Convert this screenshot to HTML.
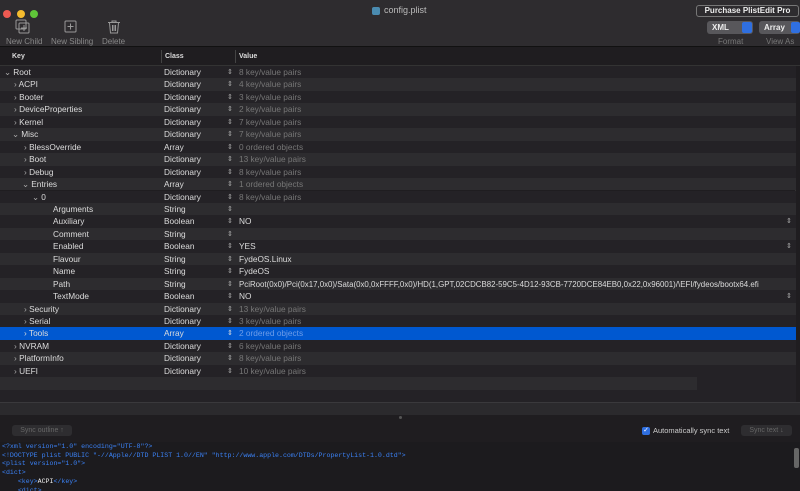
<!DOCTYPE html>
<html><head><meta charset="utf-8"><style>
*{margin:0;padding:0;box-sizing:border-box}
html,body{width:800px;height:491px;overflow:hidden}
body{background:#1f1d20;font-family:"Liberation Sans",sans-serif;font-size:8px;color:#dcdcdc;position:relative}
.a{position:absolute}
.tb{left:0;top:0;width:800px;height:47px;background:#2e2c2f;border-bottom:1px solid #111}
.hdr{left:0;top:47px;width:800px;height:19px;background:#1f1d20;border-bottom:1px solid #333}
.row{position:absolute;left:0;width:796px;height:12.45px;line-height:13px;white-space:nowrap;font-size:8.3px}
.e{background:#242226}.o{background:#2d2c2f}
.sel{background:#0058d0}
.k,.c,.v,.s{position:absolute;top:0}
.c{left:164px}.s{left:227px;color:#aaa;font-size:7px}.v{left:239px}
.g{color:#777}
.ch{color:#aaa}
.mono{font-family:"Liberation Mono",monospace;font-size:6.6px;line-height:8.7px;color:#3b82f6;white-space:pre}
.btn{border-radius:3px;color:#666;background:#2e2d30;font-size:7px;text-align:center}
</style></head><body>
<div class="a" style="left:0;top:0;width:800px;height:4px;background:#1d4f7a"></div>
<div class="a tb"></div>
<div class="a" style="left:3px;top:10px;width:8px;height:8px;border-radius:50%;background:#ee5a52"></div>
<div class="a" style="left:17px;top:10px;width:8px;height:8px;border-radius:50%;background:#f4bb2e"></div>
<div class="a" style="left:30px;top:10px;width:8px;height:8px;border-radius:50%;background:#5fc639"></div>
<div class="a" style="left:372px;top:7px;width:8px;height:8px;border-radius:2px;background:#4a8bb0"></div>
<div class="a" style="left:384px;top:5px;font-size:9px;color:#bbb">config.plist</div>
<svg class="a" style="left:14px;top:19px" width="18" height="16" viewBox="0 0 18 16" fill="none" stroke="#999" stroke-width="1"><rect x="2" y="1" width="10" height="9" rx="1"/><rect x="5" y="4" width="10" height="10" rx="1"/><path d="M10 6v6M7 9h6"/></svg>
<svg class="a" style="left:64px;top:20px" width="14" height="14" viewBox="0 0 14 14" fill="none" stroke="#999"><rect x="1" y="1" width="11" height="11" rx="1"/><path d="M6.5 3.5v6M3.5 6.5h6"/></svg>
<svg class="a" style="left:107px;top:20px" width="14" height="14" viewBox="0 0 14 14" fill="none" stroke="#999"><path d="M1 2.5h12M5 2.5V1h4v1.5M2.5 3l1 10h7l1-10M5.5 5v6M7 5v6M8.5 5v6"/></svg>
<div class="a" style="left:6px;top:37px;color:#888">New Child</div>
<div class="a" style="left:51px;top:37px;color:#888">New Sibling</div>
<div class="a" style="left:102px;top:37px;color:#888">Delete</div>
<div class="a" style="left:696px;top:5px;width:103px;height:12px;border:1px solid #777;border-radius:3px;text-align:center;font-size:8px;line-height:10px;color:#eee;font-weight:bold">Purchase PlistEdit Pro</div>
<div class="a" style="left:707px;top:21px;width:46px;height:13px;border-radius:3px;background:#58575b;color:#eee;font-weight:bold;line-height:13px;padding-left:5px">XML</div>
<div class="a" style="left:742px;top:22px;width:10px;height:11px;border-radius:2px;background:#2f6fe0"></div>
<div class="a" style="left:759px;top:21px;width:41px;height:13px;border-radius:3px;background:#58575b;color:#eee;font-weight:bold;line-height:13px;padding-left:5px">Array</div>
<div class="a" style="left:791px;top:22px;width:9px;height:11px;border-radius:2px;background:#2f6fe0"></div>
<div class="a" style="left:718px;top:37px;color:#777">Format</div>
<div class="a" style="left:766px;top:37px;color:#777">View As</div>
<div class="a hdr"></div>
<div class="a" style="left:12px;top:53px;font-weight:bold;font-size:7px">Key</div>
<div class="a" style="left:161px;top:50px;width:1px;height:13px;background:#444"></div>
<div class="a" style="left:165px;top:53px;font-weight:bold;font-size:7px">Class</div>
<div class="a" style="left:235px;top:50px;width:1px;height:13px;background:#444"></div>
<div class="a" style="left:239px;top:53px;font-weight:bold;font-size:7px">Value</div>
<div class="a" style="left:795px;top:66px;width:5px;height:338px;background:#1f1d20;border-left:1px solid #333"></div>

<div class="row e" style="top:66px"><span class="k" style="left:4px"><span class="ch">⌄</span> Root</span><span class="c">Dictionary</span><span class="s">⇕</span><span class="v g">8 key/value pairs</span></div>
<div class="row o" style="top:78.45px"><span class="k" style="left:14px"><span class="ch">›</span> ACPI</span><span class="c">Dictionary</span><span class="s">⇕</span><span class="v g">4 key/value pairs</span></div>
<div class="row e" style="top:90.9px"><span class="k" style="left:14px"><span class="ch">›</span> Booter</span><span class="c">Dictionary</span><span class="s">⇕</span><span class="v g">3 key/value pairs</span></div>
<div class="row o" style="top:103.35px"><span class="k" style="left:14px"><span class="ch">›</span> DeviceProperties</span><span class="c">Dictionary</span><span class="s">⇕</span><span class="v g">2 key/value pairs</span></div>
<div class="row e" style="top:115.8px"><span class="k" style="left:14px"><span class="ch">›</span> Kernel</span><span class="c">Dictionary</span><span class="s">⇕</span><span class="v g">7 key/value pairs</span></div>
<div class="row o" style="top:128.25px"><span class="k" style="left:12px"><span class="ch">⌄</span> Misc</span><span class="c">Dictionary</span><span class="s">⇕</span><span class="v g">7 key/value pairs</span></div>
<div class="row e" style="top:140.7px"><span class="k" style="left:24px"><span class="ch">›</span> BlessOverride</span><span class="c">Array</span><span class="s">⇕</span><span class="v g">0 ordered objects</span></div>
<div class="row o" style="top:153.15px"><span class="k" style="left:24px"><span class="ch">›</span> Boot</span><span class="c">Dictionary</span><span class="s">⇕</span><span class="v g">13 key/value pairs</span></div>
<div class="row e" style="top:165.6px"><span class="k" style="left:24px"><span class="ch">›</span> Debug</span><span class="c">Dictionary</span><span class="s">⇕</span><span class="v g">8 key/value pairs</span></div>
<div class="row o" style="top:178.05px"><span class="k" style="left:22px"><span class="ch">⌄</span> Entries</span><span class="c">Array</span><span class="s">⇕</span><span class="v g">1 ordered objects</span></div>
<div class="row e" style="top:190.5px"><span class="k" style="left:32px"><span class="ch">⌄</span> 0</span><span class="c">Dictionary</span><span class="s">⇕</span><span class="v g">8 key/value pairs</span></div>
<div class="row o" style="top:202.95px"><span class="k" style="left:53px">Arguments</span><span class="c">String</span><span class="s">⇕</span></div>
<div class="row e" style="top:215.4px"><span class="k" style="left:53px">Auxiliary</span><span class="c">Boolean</span><span class="s">⇕</span><span class="v">NO</span><span class="s" style="left:786px">⇕</span></div>
<div class="row o" style="top:227.85px"><span class="k" style="left:53px">Comment</span><span class="c">String</span><span class="s">⇕</span></div>
<div class="row e" style="top:240.3px"><span class="k" style="left:53px">Enabled</span><span class="c">Boolean</span><span class="s">⇕</span><span class="v">YES</span><span class="s" style="left:786px">⇕</span></div>
<div class="row o" style="top:252.75px"><span class="k" style="left:53px">Flavour</span><span class="c">String</span><span class="s">⇕</span><span class="v">FydeOS.Linux</span></div>
<div class="row e" style="top:265.2px"><span class="k" style="left:53px">Name</span><span class="c">String</span><span class="s">⇕</span><span class="v">FydeOS</span></div>
<div class="row o" style="top:277.65px"><span class="k" style="left:53px">Path</span><span class="c">String</span><span class="s">⇕</span><span class="v" style="font-size:7.9px">PciRoot(0x0)/Pci(0x17,0x0)/Sata(0x0,0xFFFF,0x0)/HD(1,GPT,02CDCB82-59C5-4D12-93CB-7720DCE84EB0,0x22,0x96001)/\EFI/fydeos/bootx64.efi</span></div>
<div class="row e" style="top:290.1px"><span class="k" style="left:53px">TextMode</span><span class="c">Boolean</span><span class="s">⇕</span><span class="v">NO</span><span class="s" style="left:786px">⇕</span></div>
<div class="row o" style="top:302.55px"><span class="k" style="left:24px"><span class="ch">›</span> Security</span><span class="c">Dictionary</span><span class="s">⇕</span><span class="v g">13 key/value pairs</span></div>
<div class="row e" style="top:315px"><span class="k" style="left:24px"><span class="ch">›</span> Serial</span><span class="c">Dictionary</span><span class="s">⇕</span><span class="v g">3 key/value pairs</span></div>
<div class="row sel" style="top:327.45px"><span class="k" style="left:24px">› Tools</span><span class="c">Array</span><span class="s" style="color:#ddd">⇕</span><span class="v" style="color:#6e9de8">2 ordered objects</span></div>
<div class="row e" style="top:339.9px"><span class="k" style="left:14px"><span class="ch">›</span> NVRAM</span><span class="c">Dictionary</span><span class="s">⇕</span><span class="v g">6 key/value pairs</span></div>
<div class="row o" style="top:352.35px"><span class="k" style="left:14px"><span class="ch">›</span> PlatformInfo</span><span class="c">Dictionary</span><span class="s">⇕</span><span class="v g">8 key/value pairs</span></div>
<div class="row e" style="top:364.8px"><span class="k" style="left:14px"><span class="ch">›</span> UEFI</span><span class="c">Dictionary</span><span class="s">⇕</span><span class="v g">10 key/value pairs</span></div>
<div class="row o" style="top:377.25px;width:697px"></div>
<div class="row e" style="top:377.25px;left:697px;width:99px"></div>
<div class="row e" style="top:389.7px"></div>
<div class="a" style="left:0;top:402px;width:800px;height:13px;background:#2b2a2d;border-top:1px solid #3a393c"></div>
<div class="a" style="left:399px;top:416px;width:3px;height:3px;border-radius:50%;background:#555"></div>
<div class="a btn" style="left:12px;top:425px;width:60px;height:11px;line-height:11px">Sync outline ↑</div>
<div class="a" style="left:642px;top:427px;width:8px;height:8px;border-radius:2px;background:#2f6fe0;color:#fff;font-size:7px;line-height:8px;text-align:center">✓</div>
<div class="a" style="left:653px;top:426px;color:#ccc;font-size:7.5px">Automatically sync text</div>
<div class="a btn" style="left:741px;top:425px;width:51px;height:11px;line-height:11px">Sync text ↓</div>
<div class="a" style="left:0;top:442px;width:800px;height:49px;background:#1c1b1e"></div>
<div class="a mono" style="left:2px;top:443px">&lt;?xml version="1.0" encoding="UTF-8"?&gt;
&lt;!DOCTYPE plist PUBLIC "-//Apple//DTD PLIST 1.0//EN" "http://www.apple.com/DTDs/PropertyList-1.0.dtd"&gt;
&lt;plist version="1.0"&gt;
&lt;dict&gt;
    &lt;key&gt;<span style="color:#eee">ACPI</span>&lt;/key&gt;
    &lt;dict&gt;
        &lt;key&gt;<span style="color:#eee">Add</span>&lt;/key&gt;</div>
<div class="a" style="left:794px;top:448px;width:5px;height:20px;border-radius:2px;background:#666"></div>
</body></html>
